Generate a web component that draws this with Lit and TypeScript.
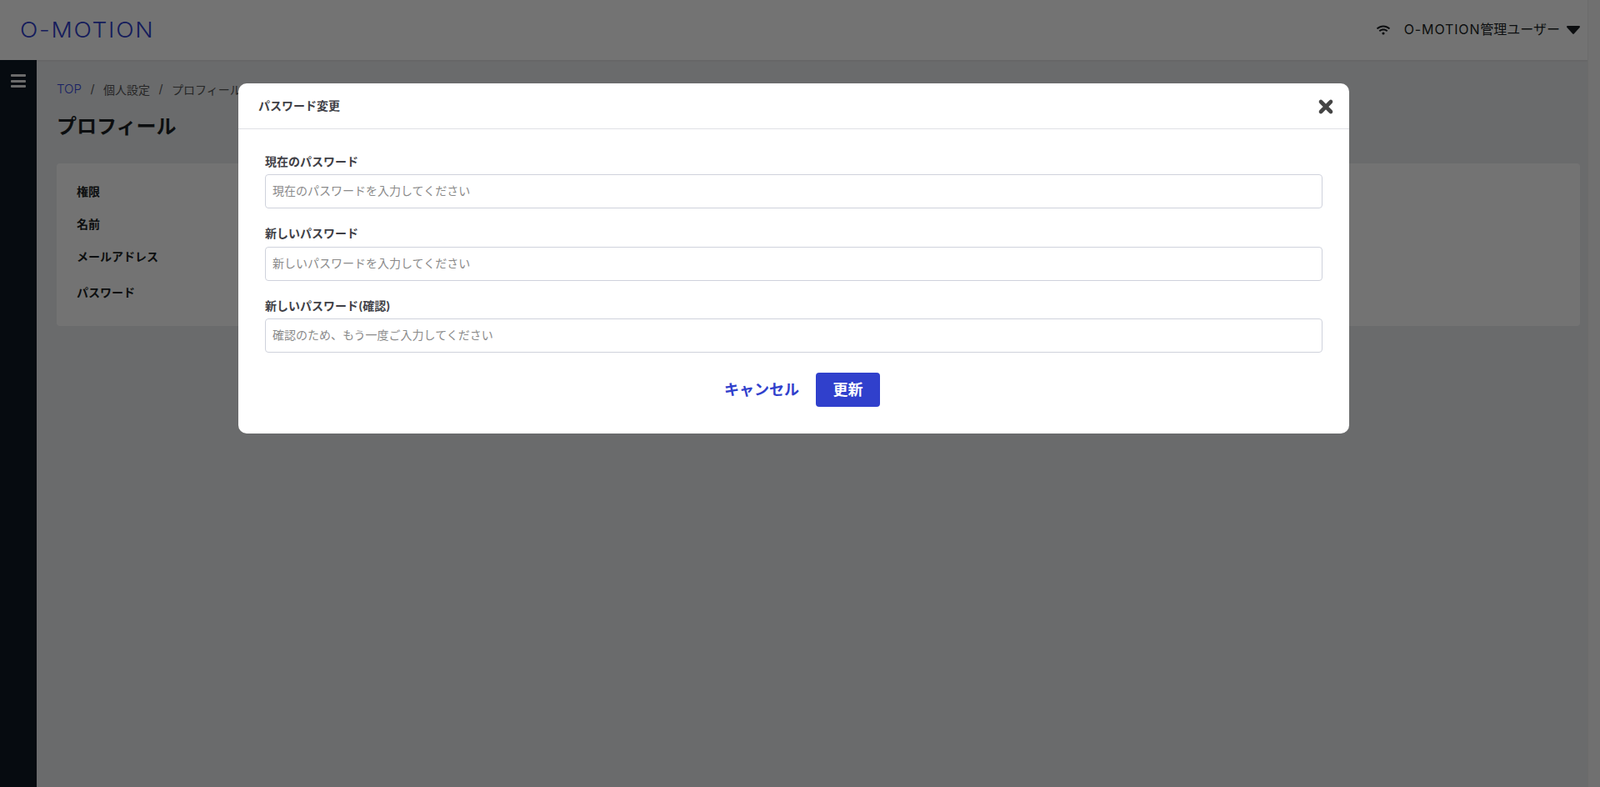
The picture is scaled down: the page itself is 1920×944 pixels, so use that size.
import { LitElement, html, css } from "lit";
import { customElement } from "lit/decorators.js";

const FIELDS = [
  { label: "現在のパスワード", placeholder: "現在のパスワードを入力してください" },
  { label: "新しいパスワード", placeholder: "新しいパスワードを入力してください" },
  { label: "新しいパスワード(確認)", placeholder: "確認のため、もう一度ご入力してください" },
];

@customElement("app-root")
export class AppRoot extends LitElement {
  static styles = css`
    :host {
      display: block;
      height: 100vh;
      overflow: hidden;
      position: relative;
      font-family: Inter, "Noto Sans CJK JP", sans-serif;
      color: #1b1f24;
    }
    * { box-sizing: border-box; }
    .page { display: flex; height: 100%; background: #ebedef; }
    .main { flex: 1; min-width: 0; display: flex; flex-direction: column; }
    .scrollbar { width: 15px; background: #f8f8f8; border-left: 1px solid #eee; }
    .header {
      height: 72px; flex: none; background: #fff; display: flex; align-items: center;
      justify-content: space-between; padding: 0 9px 0 24px;
      box-shadow: 0 1px 2px rgba(0,0,0,.08);
    }
    .logo {
      font-size: 26px; font-weight: 350; letter-spacing: 1.6px; color: #3040cc; line-height: 1;
      transform: scaleX(1.08); transform-origin: left center;
    }
    .user { display: flex; align-items: center; font-size: 16px; color: #1b1f24; }
    .user span { position: relative; top: -2px; }
    .user .latin { top: 0; letter-spacing: .85px; }
    .wifi { width: 16px; height: 14px; margin-right: 17px; display: block; }
    .caret { width: 16px; height: 10px; margin-left: 8px; display: block; }
    .body { flex: 1; display: flex; min-height: 0; }
    .sidebar { width: 44px; flex: none; background: #0e1a24; padding: 17px 13px 0; }
    .burger { display: flex; flex-direction: column; gap: 3.5px; }
    .burger span { display: block; height: 3px; width: 18px; background: #eeeeee; border-radius: 1px; }
    .content { flex: 1; min-width: 0; padding: 24px 9px 0 24px; }
    .crumbs { display: flex; align-items: center; height: 21px; font-size: 14px; color: #555; }
    .crumbs a { color: #3448e0; text-decoration: none; font-size: 15px; font-weight: 300; }
    .crumbs .sep { margin: 0 10.5px; color: #555; }
    h1 { margin: 20px 0 0; font-size: 24px; line-height: 30px; font-weight: 700; color: #1b1f24; }
    .card { margin-top: 29px; height: 195px; background: #fff; border-radius: 4px; padding: 23px 24px; }
    .row { font-size: 14px; font-weight: 600; line-height: 21px; color: #1b1f24; }
    .row + .row { margin-top: 17.5px; }
    .row.mail { margin-top: 18.5px; }
    .row.last { margin-top: 22px; }
    .backdrop { position: absolute; inset: 0; background: rgba(0, 0, 0, .55); }
    .modal {
      position: absolute; left: 286px; top: 100px; width: 1333px; height: 420px;
      background: #fff; border-radius: 10px; overflow: hidden;
    }
    .m-head {
      height: 55px; display: flex; align-items: center; justify-content: space-between;
      padding: 0 18px 3px 24px; border-bottom: 1px solid #dfe1e6;
    }
    .m-title { font-size: 14px; font-weight: 600; color: #3f3f46; }
    .close { width: 20px; height: 20px; display: block; position: relative; top: 2px; left: 0; }
    .m-body { padding: 27.5px 32px 0; }
    .field { margin-bottom: 19px; }
    label { display: block; font-size: 14px; line-height: 21px; font-weight: 600; color: #3f3f46; margin-bottom: 5.5px; }
    .input {
      display: block; width: 100%; height: 41px; border: 1px solid #cfd2dc; border-radius: 4px;
      padding: 0 8px 2px; font: inherit; font-size: 14px; background: #fff; outline: none;
    }
    .input::placeholder { color: #8a8a8a; opacity: 1; }
    .actions { display: flex; justify-content: center; align-items: center; gap: 20px; margin-top: 24px; padding-left: 20px; }
    .cancel { font-size: 18px; font-weight: 600; color: #3040cc; background: none; border: 0; padding: 0 0 4px; font-family: inherit; }
    .save {
      width: 77px; height: 41px; border: 0; border-radius: 4px; background: #3040cc; color: #fff;
      font-size: 18px; font-weight: 600; font-family: inherit; padding: 0 0 4px;
    }
  `;

  render() {
    return html`
      <div class="page">
        <div class="main">
          <header class="header">
            <div class="logo">O-MOTION</div>
            <div class="user">
              <svg class="wifi" viewBox="0 0 640 512" fill="#1b1f24"><path d="M634.9 154.9C457.7-9 182.2-8.9 5.1 154.9c-6.7 6.2-6.8 16.6-.4 23l34.2 34c6.1 6.1 16 6.2 22.4.4 146-133.7 371.3-133.7 517.3 0 6.4 5.9 16.3 5.7 22.4-.4l34.2-34c6.4-6.3 6.3-16.8-.4-23zM320 352c-35.3 0-64 28.7-64 64s28.7 64 64 64 64-28.7 64-64-28.7-64-64-64zm202.7-83.6c-115.3-102-290.2-101.9-405.3 0-6.9 6.1-7.1 16.7-.6 23.2l34.4 34c6 5.9 15.7 6.3 22.1.8 84-72.6 209.7-72.4 293.5 0 6.4 5.5 16.1 5.2 22.1-.8l34.4-34c6.5-6.5 6.3-17.1-.6-23.2z"/></svg>
              <span><span class="latin">O-MOTION</span>管理ユーザー</span>
              <svg class="caret" viewBox="0 0 16 10" fill="#1b1f24"><path d="M1.2 0h13.6c1 0 1.5 1.2.8 1.9L8.8 9.5c-.4.5-1.2.5-1.6 0L.4 1.9C-.3 1.2.2 0 1.2 0z"/></svg>
            </div>
          </header>
          <div class="body">
            <nav class="sidebar"><div class="burger"><span></span><span></span><span></span></div></nav>
            <main class="content">
              <div class="crumbs"><a>TOP</a><span class="sep">/</span><span>個人設定</span><span class="sep">/</span><span>プロフィール</span></div>
              <h1>プロフィール</h1>
              <section class="card">
                <div class="row">権限</div>
                <div class="row">名前</div>
                <div class="row mail">メールアドレス</div>
                <div class="row last">パスワード</div>
              </section>
            </main>
          </div>
        </div>
        <div class="scrollbar"></div>
      </div>
      <div class="backdrop"></div>
      <div class="modal">
        <div class="m-head">
          <div class="m-title">パスワード変更</div>
          <svg class="close" viewBox="0 0 20 20"><path d="M4 4l12 12M16 4L4 16" stroke="#444" stroke-width="4.6" stroke-linecap="round" fill="none"/></svg>
        </div>
        <div class="m-body">
          ${FIELDS.map(
            (f) => html`<div class="field"><label>${f.label}</label><input class="input" type="password" placeholder=${f.placeholder} /></div>`
          )}
          <div class="actions">
            <button class="cancel">キャンセル</button>
            <button class="save">更新</button>
          </div>
        </div>
      </div>
    `;
  }
}
